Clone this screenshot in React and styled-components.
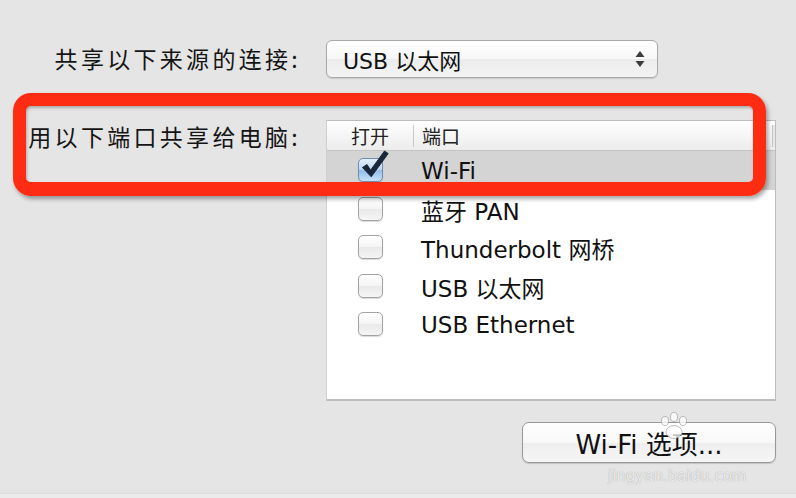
import React from 'react'
import styled, { createGlobalStyle } from 'styled-components'

const GlobalStyle = createGlobalStyle`
  html, body {
    margin: 0;
    padding: 0;
    background: #e5e5e5;
  }
  body {
    width: 796px;
    height: 498px;
    overflow: hidden;
    font-family: "DejaVu Sans", "Noto Sans CJK SC", sans-serif;
    color: #111;
  }
`

const ports = [
  { name: 'Wi-Fi', on: true },
  { name: '蓝牙 PAN', on: false },
  { name: 'Thunderbolt 网桥', on: false },
  { name: 'USB 以太网', on: false },
  { name: 'USB Ethernet', on: false },
]

function CheckBox({ checked }) {
  return (
    <Box $checked={checked}>
      {checked && (
        <svg width="30" height="30" viewBox="0 0 30 30">
          <path
            d="M3.5 12.5 L8 9.6 L11.6 15.2 L25.5 -4 L29.2 -1.4 L12.2 21.8 Z"
            fill="#18273a"
            strokeLinejoin="round"
            stroke="#18273a"
            strokeWidth="1"
          />
        </svg>
      )}
    </Box>
  )
}

function App() {
  return (
    <Page>
      <GlobalStyle />
      <Form>
        <Label>共享以下来源的连接:</Label>
        <Popup>
          <span>USB 以太网</span>
          <svg width="10" height="18" viewBox="0 0 10 18">
            <path d="M5 1 L9.5 7 L0.5 7 Z" fill="#3c3c3c" />
            <path d="M5 17 L9.5 11 L0.5 11 Z" fill="#3c3c3c" />
          </svg>
        </Popup>

        <Label $top>用以下端口共享给电脑:</Label>
        <Table>
          <Header>
            <HeadCell $w="86px" $center>打开</HeadCell>
            <HeadCell $grow>端口</HeadCell>
            <HeadCorner />
          </Header>
          {ports.map((p) => (
            <Row key={p.name} $selected={p.name === 'Wi-Fi'}>
              <CheckCell>
                <CheckBox checked={p.on} />
              </CheckCell>
              <PortName>{p.name}</PortName>
            </Row>
          ))}
        </Table>

        <span />
        <ButtonRow>
          <Button>Wi-Fi 选项...</Button>
        </ButtonRow>
      </Form>

      <Highlight />
      <Paw width="34" height="28" viewBox="0 0 34 28">
        <g fill="rgba(255,255,255,0.75)" stroke="rgba(140,140,140,0.55)" strokeWidth="1">
          <ellipse cx="8" cy="9" rx="3.5" ry="4.5" />
          <ellipse cx="17" cy="5" rx="3.5" ry="4.5" />
          <ellipse cx="26" cy="9" rx="3.5" ry="4.5" />
          <ellipse cx="17" cy="20" rx="8" ry="6.5" />
        </g>
      </Paw>
      <Watermark>jingyan.baidu.com</Watermark>
      <Footer />
    </Page>
  )
}

const Page = styled.div`
  position: relative;
  width: 796px;
  height: 498px;
  overflow: hidden;
`

const Form = styled.div`
  display: grid;
  grid-template-columns: 300px 450px;
  column-gap: 26px;
  padding-top: 40px;
  align-items: center;
`

const Label = styled.div`
  text-align: right;
  font-family: "Noto Sans CJK SC", sans-serif;
  font-size: 23px;
  letter-spacing: 3.3px;
  color: #151515;
  align-self: ${(p) => (p.$top ? 'start' : 'center')};
  margin-top: ${(p) => (p.$top ? '41px' : '-2px')};
  margin-right: -1px;
`

const Popup = styled.div`
  width: 332px;
  height: 38px;
  box-sizing: border-box;
  border: 1px solid #a9a9a9;
  border-radius: 6px;
  background: linear-gradient(#ffffff, #f7f7f7 50%, #ececec 51%, #f4f4f4);
  box-shadow: 0 1px 1px rgba(0, 0, 0, 0.12);
  display: flex;
  align-items: center;
  justify-content: space-between;
  padding: 0 12px 0 16px;
  font-size: 22px;
  color: #111;
`

const Table = styled.div`
  margin-top: 42px;
  width: 450px;
  height: 281px;
  box-sizing: border-box;
  border: 1px solid #bdbdbd;
  border-bottom-width: 2px;
  border-left-color: #cfcfcf;
  background: #fff;
  display: flex;
  flex-direction: column;
`

const Header = styled.div`
  height: 29px;
  flex: none;
  display: flex;
  align-items: center;
  border-bottom: 1px solid #c4c4c4;
  background: linear-gradient(#ffffff, #f6f6f6 50%, #ececec);
`

const HeadCell = styled.div`
  width: ${(p) => p.$w || 'auto'};
  flex: ${(p) => (p.$grow ? 1 : 'none')};
  text-align: ${(p) => (p.$center ? 'center' : 'left')};
  padding-left: ${(p) => (p.$center ? '0' : '8px')};
  font-family: "Noto Sans CJK SC", sans-serif;
  font-size: 19px;
  line-height: 22px;
  color: #222;
  & + & {
    border-left: 1px solid #c9c9c9;
  }
`

const HeadCorner = styled.div`
  width: 2px;
  height: 22px;
  border-left: 1px solid #c4c4c4;
  background: #e8e8e8;
`

const Row = styled.div`
  height: 38.5px;
  flex: none;
  display: flex;
  align-items: center;
  background: ${(p) => (p.$selected ? '#d4d4d4' : 'transparent')};
`

const CheckCell = styled.div`
  width: 86px;
  display: flex;
  justify-content: center;
`

const Box = styled.div`
  position: relative;
  width: 25px;
  height: 24px;
  box-sizing: border-box;
  border-radius: 5px;
  border: 1px solid ${(p) => (p.$checked ? '#6d8db4' : '#a3a3a3')};
  background: ${(p) =>
    p.$checked
      ? 'linear-gradient(#e4f0fc, #b9d5f2 50%, #93bde9 52%, #c7e0f8)'
      : 'linear-gradient(#ffffff, #f4f4f4 50%, #e9e9e9 52%, #f5f5f5)'};
  box-shadow: 0 1px 1px rgba(0, 0, 0, 0.15);
  svg {
    position: absolute;
    left: 0;
    top: -4px;
    overflow: visible;
  }
`

const PortName = styled.div`
  padding-left: 8px;
  padding-top: 2px;
  font-size: 23px;
  color: #111;
  white-space: nowrap;
`

const ButtonRow = styled.div`
  display: flex;
  justify-content: flex-end;
  margin-top: 21px;
`

const Button = styled.div`
  width: 254px;
  height: 41px;
  box-sizing: border-box;
  border: 1px solid #979797;
  border-radius: 7px;
  background: linear-gradient(#ffffff, #f8f8f8 50%, #eeeeee 51%, #f6f6f6);
  box-shadow: 0 1px 1px rgba(0, 0, 0, 0.15);
  display: flex;
  align-items: center;
  justify-content: center;
  font-size: 26px;
  color: #111;
`

const Highlight = styled.div`
  position: absolute;
  left: 13px;
  top: 93px;
  width: 753px;
  height: 103px;
  box-sizing: border-box;
  border: 13px solid #fe2c12;
  border-bottom-width: 14px;
  border-radius: 18px;
  box-shadow: 2px 3px 4px rgba(0, 0, 0, 0.35), inset 1px 2px 3px rgba(0, 0, 0, 0.25);
  pointer-events: none;
`

const Paw = styled.svg`
  position: absolute;
  left: 657px;
  top: 412px;
  pointer-events: none;
`

const Watermark = styled.div`
  position: absolute;
  left: 608px;
  top: 466px;
  pointer-events: none;
  font-family: "DejaVu Sans", sans-serif;
  font-size: 15px;
  line-height: 20px;
  color: rgba(255, 255, 255, 0.8);
  text-shadow: 0 0 1px rgba(110, 110, 110, 0.7);
`

const Footer = styled.div`
  position: absolute;
  left: 0;
  right: 0;
  bottom: 0;
  height: 4px;
  background: #ebebeb;
  border-top: 1px solid #dcdcdc;
`

export default App
